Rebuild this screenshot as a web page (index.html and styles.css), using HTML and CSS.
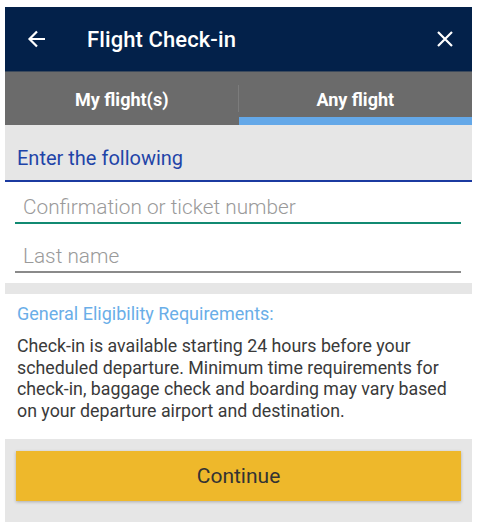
FILE: index.html
```html
<!DOCTYPE html>
<html lang="en">
<head>
  <meta charset="UTF-8">
  <meta name="viewport" content="width=device-width, initial-scale=1.0">
  <title>Flight Check-in</title>
  <link rel="stylesheet" href="styles.css">
</head>
<body>
  <div class="app">
    <header class="top-bar">
      <button class="icon-btn back-btn" aria-label="Back">
        <svg width="20" height="20" viewBox="0 0 20 20">
          <path d="M18 10H3M10 2.5L2.5 10L10 17.5" fill="none" stroke="#fff" stroke-width="2.2"/>
        </svg>
      </button>
      <h1>Flight Check-in</h1>
      <button class="icon-btn close-btn" aria-label="Close">
        <svg width="18" height="18" viewBox="0 0 18 18">
          <path d="M2 2L16 16M16 2L2 16" fill="none" stroke="#fff" stroke-width="2.2"/>
        </svg>
      </button>
    </header>

    <nav class="tabs">
      <div class="tab">My flight(s)</div>
      <div class="tab active">Any flight</div>
    </nav>

    <div class="section-title">Enter the following</div>

    <form class="form-card">
      <input type="text" class="field focused" placeholder="Confirmation or ticket number">
      <input type="text" class="field" placeholder="Last name">
    </form>

    <section class="info-card">
      <h2>General Eligibility Requirements:</h2>
      <p>Check-in is available starting 24 hours before your scheduled departure. Minimum time requirements for check-in, baggage check and boarding may vary based on your departure airport and destination.</p>
    </section>

    <div class="footer">
      <button class="continue-btn">Continue</button>
    </div>
  </div>
</body>
</html>
```

FILE: styles.css
```css
body {
  margin: 0;
  background: #ffffff;
  font-family: Roboto, 'Noto Sans', sans-serif;
}

.app {
  margin: 7px 9px 0 5px;
  background: #e6e6e6;
  height: 515px;
}

.top-bar {
  display: flex;
  align-items: center;
  height: 64px;
  background: #03214a;
  color: #fff;
}

.icon-btn {
  display: flex;
  align-items: center;
  justify-content: center;
  background: none;
  border: none;
  padding: 0;
  cursor: pointer;
}

.back-btn {
  width: 44px;
  margin-left: 10px;
}

.close-btn {
  width: 40px;
  margin-right: 7px;
}

.top-bar h1 {
  flex: 1;
  margin: 0 0 0 28px;
  font-size: 22px;
  font-weight: 500;
  letter-spacing: 0.1px;
}

.tabs {
  display: flex;
  height: 53px;
  background: #6b6b6b;
  border-top: 1px solid #3c4a5c;
}

.tab {
  flex: 1;
  display: flex;
  align-items: center;
  justify-content: center;
  color: #fff;
  font-size: 18px;
  font-weight: 700;
  position: relative;
  box-sizing: border-box;
  padding-top: 2px;
}

.tab:first-child::after {
  content: '';
  position: absolute;
  right: 0;
  top: 13px;
  bottom: 13px;
  width: 1px;
  background: #7c7c7c;
}

.tab.active {
  border-bottom: 8px solid #64a8e8;
  padding-top: 10px;
}

.section-title {
  height: 57px;
  line-height: 66px;
  padding-left: 12px;
  font-size: 20px;
  color: #1f44a8;
  border-bottom: 2px solid #1b3aa0;
  box-sizing: border-box;
}

.form-card {
  display: flex;
  flex-direction: column;
  gap: 7px;
  background: #fff;
  padding: 0 11px 10px 10px;
  margin: 0;
}

.field {
  height: 42px;
  box-sizing: border-box;
  border: none;
  border-bottom: 2px solid #8a8a8a;
  padding: 10px 0 0 8px;
  font-family: Roboto, 'Noto Sans', sans-serif;
  font-size: 20.8px;
  font-weight: 300;
  color: #333;
  background: transparent;
  outline: none;
}

.field::placeholder {
  color: #9a9a9a;
}

.field.focused {
  border-bottom-color: #118a72;
}

.info-card {
  background: #fff;
  margin-top: 11px;
  padding: 9px 12px 17px;
}

.info-card h2 {
  margin: 0 0 10px;
  font-size: 18px;
  line-height: 22px;
  font-weight: 400;
  color: #6aaee8;
}

.info-card p {
  margin: 0;
  font-size: 17.8px;
  line-height: 21.7px;
  color: #3a3a3a;
}

.footer {
  padding: 12px 11px 0;
}

.continue-btn {
  display: block;
  width: 100%;
  height: 50px;
  border: none;
  background: #eeb82b;
  color: #333;
  font-family: Roboto, 'Noto Sans', sans-serif;
  font-size: 21px;
  box-shadow: 0 1px 3px rgba(0, 0, 0, 0.25);
  cursor: pointer;
}
```
